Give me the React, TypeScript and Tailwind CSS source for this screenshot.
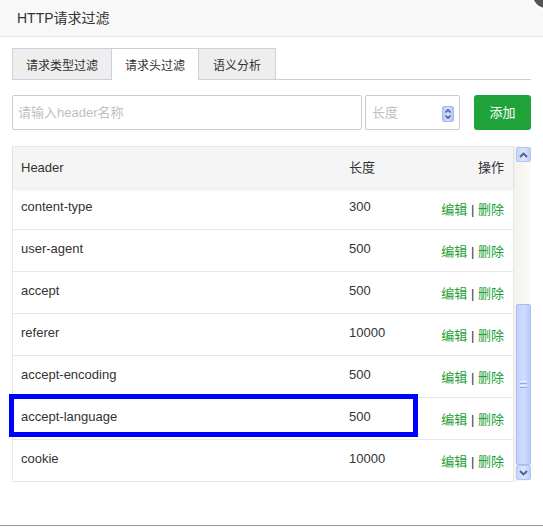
import React from "react";

const rows = [
  { name: "content-type", len: "300" },
  { name: "user-agent", len: "500" },
  { name: "accept", len: "500" },
  { name: "referer", len: "10000" },
  { name: "accept-encoding", len: "500" },
  { name: "accept-language", len: "500", hl: true },
  { name: "cookie", len: "10000" },
];

function Spinner() {
  return (
    <svg width="12" height="16" viewBox="0 0 12 16" className="shrink-0">
      <defs>
        <linearGradient id="sg" x1="0" x2="1" y1="0" y2="0">
          <stop offset="0" stopColor="#b7c9f7" />
          <stop offset="0.5" stopColor="#d3defb" />
          <stop offset="1" stopColor="#b0c4f5" />
        </linearGradient>
      </defs>
      <rect x="0.5" y="0.5" width="11" height="15" rx="1.5" fill="url(#sg)" stroke="#a7bcee" />
      <path d="M3.5 6.5 L6 4 L8.5 6.5" fill="none" stroke="#4d6185" strokeWidth="1.6" />
      <path d="M3.5 9.5 L6 12 L8.5 9.5" fill="none" stroke="#4d6185" strokeWidth="1.6" />
    </svg>
  );
}

function ScrollBtn({ up }: { up: boolean }) {
  return (
    <div className="w-[15px] h-[15px] rounded-[2px] border border-[#b2c6f4] bg-gradient-to-r from-[#c4d4fb] via-[#dbe5fd] to-[#bccffa] flex items-center justify-center">
      <svg width="9" height="6" viewBox="0 0 9 6">
        {up ? (
          <path d="M1 5 L4.5 1.5 L8 5" fill="none" stroke="#4d6185" strokeWidth="1.8" />
        ) : (
          <path d="M1 1 L4.5 4.5 L8 1" fill="none" stroke="#4d6185" strokeWidth="1.8" />
        )}
      </svg>
    </div>
  );
}

export default function App() {
  return (
    <div
      className="relative w-[543px] h-[526px] overflow-hidden bg-white border-b border-[#9a9a9a] text-[#333]"
      style={{ fontFamily: '"Liberation Sans", Arial, "Noto Sans CJK SC", sans-serif' }}
    >
      {/* title bar */}
      <div className="h-[37px] bg-[#f8f8f8] border-b border-[#e6e6e6] pl-[17px] flex items-center text-[14px] text-[#333]">
        HTTP请求过滤
      </div>
      <div className="absolute left-[531px] top-[-20px] w-[30px] h-[30px] rounded-full bg-[#555] border-2 border-white" />

      <div className="px-[12px]">
        {/* tabs */}
        <div className="mt-[11px] flex border-b border-[#cfcfdc] h-[32px]">
          <div className="w-[100px] h-[32px] border border-[#cfcfdc] bg-[#eeeeee] flex items-center justify-center pt-[3px] text-[12px]">
            请求类型过滤
          </div>
          <div className="w-[87px] h-[32px] border-t border-r border-[#cfcfdc] bg-white flex items-center justify-center pt-[3px] text-[12px]">
            请求头过滤
          </div>
          <div className="w-[77px] h-[32px] border-t border-r border-b border-[#cfcfdc] bg-[#eeeeee] flex items-center justify-center pt-[3px] text-[12px]">
            语义分析
          </div>
        </div>

        {/* inputs */}
        <div className="mt-[15px] flex items-center h-[35px]">
          <div className="w-[350px] h-[35px] border border-[#cccccc] rounded-[2px] flex items-center pl-[5px]">
            <input
              className="w-full outline-none text-[13px] placeholder:text-[#c0c0c0] bg-transparent"
              placeholder="请输入header名称"
            />
          </div>
          <div className="ml-[3px] w-[95px] h-[35px] border border-[#cccccc] rounded-[2px] flex items-center pl-[6px] pr-[5px]">
            <input
              className="flex-1 min-w-0 outline-none text-[13px] placeholder:text-[#c0c0c0] bg-transparent"
              placeholder="长度"
            />
            <div className="pt-[2px]">
              <Spinner />
            </div>
          </div>
          <button className="ml-[14px] w-[57px] h-[35px] rounded-[3px] bg-[#21a33c] text-white text-[13px] flex items-center justify-center">
            添加
          </button>
        </div>

        {/* table */}
        <div className="mt-[16px] flex h-[336px]">
          <div className="w-[502px] border-t border-l border-r border-[#e8e8e8] flex flex-col">
            <div className="h-[41px] bg-[#f5f5f5] flex items-center text-[13px] shadow-[0_2px_3px_rgba(0,0,0,0.08)] relative z-10">
              <div className="w-[327px] pl-[8px]">Header</div>
              <div className="flex-1 pl-[9px]">长度</div>
              <div className="pr-[9px]">操作</div>
            </div>
            {rows.map((r) => (
              <div
                key={r.name}
                className="relative h-[42px] shrink-0 border-b border-[#e8e8e8] flex items-start text-[13px]"
              >
                <div className="w-[327px] pl-[8px] pt-[10px] leading-[18px]">{r.name}</div>
                <div className="flex-1 pl-[9px] pt-[10px] leading-[18px]">{r.len}</div>
                <div className="pr-[9px] pt-[13px] leading-[18px] text-[#1d9f35]">
                  编辑 <span className="text-[#333]">|</span> 删除
                </div>
                {r.hl && (
                  <div className="absolute left-[-4px] top-[-4px] w-[409px] h-[43px] border-[5px] border-[#0000ff]" />
                )}
              </div>
            ))}
          </div>
          {/* scrollbar */}
          <div className="w-[17px] h-[335px] bg-gradient-to-r from-[#f3f2ec] to-[#fbfbf8] flex flex-col pt-[1px] pl-[2px] pb-[1px]">
            <ScrollBtn up />
            <div className="flex-1 flex flex-col justify-end">
              <div className="h-[161px] w-[15px] rounded-[2px] border border-[#a9bff3] bg-gradient-to-r from-[#c0d1fb] via-[#cfdcfd] to-[#b9ccf8] flex items-center justify-center">
                <div className="flex flex-col gap-[1px]">
                  <div className="w-[7px] h-[1px] bg-[#eef3fe]" />
                  <div className="w-[7px] h-[1px] bg-[#8eacf0]" />
                  <div className="w-[7px] h-[1px] bg-[#eef3fe]" />
                  <div className="w-[7px] h-[1px] bg-[#8eacf0]" />
                </div>
              </div>
            </div>
            <ScrollBtn up={false} />
          </div>
        </div>
      </div>
    </div>
  );
}
